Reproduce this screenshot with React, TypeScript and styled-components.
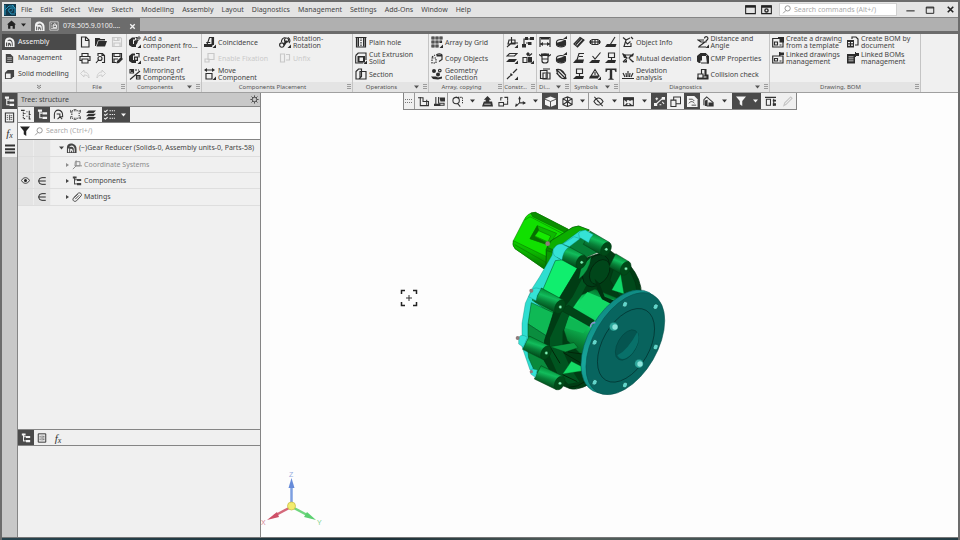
import React from "react";
import styled, { createGlobalStyle, css } from "styled-components";

const ink = "#444444";
const line = "#858585";

const GlobalStyle = createGlobalStyle`
  *, *::before, *::after { box-sizing: border-box; }
  html, body, #root { height: 100%; margin: 0; }
  body { overflow: hidden; background: #fdfdfd; color: ${ink}; font: 7px/8px "Noto Sans", "Open Sans", sans-serif; }
  button, input { font: inherit; color: inherit; margin: 0; }
  button { border: 0; padding: 0; background: none; text-align: left; }
`;

/* Icons are drawn on a 12-unit grid.
   Prefix: s stroke, t thin stroke, d dashed stroke, f fill, w paper fill, k ink stroke. */
const icons: Record<string, string[]> = {
  assembly: ["f:M1 11V5C1 2 3 .5 5.500 .5C9 .5 11.500 3 11.500 6.500V11z", "w:M2.200 6h1.300v4H2.200z", "w:M4 3.500c3-2 5.500.5 5.500 4V10H8.500V7c0-2-1.500-3.500-4.500-2.500z", "w:M4.500 6.500c2-1 3 .5 3 2V10H6.500V8.500H5.500V10h-1z"],
  document: ["f:M2 1h5l3 3v7H2z", "w:M3.500 5h5v.6h-5zM3.500 7h5v.6h-5zM3.500 9h5v.6h-5z"],
  solid: ["f:M1 4l3-3h7v7l-3 3H1z", "w:M2.200 5h5v5h-5z"],
  drawing: ["t:M1 1h10v10H1zM2.500 3h1M2.500 5h1M2.500 7h1M2.500 9h7", "s:M5 8V5l2-2 2 2v3zM5 5h4"],
  home: ["f:M0 6l6-5.500L12 6H10.500v5.500h-3V8h-3v3.500h-3V6z"],
  newFile: ["s:M2.500 1h4.500l3 3v7H2.500zM6.500 1.500v3h3"],
  folder: ["f:M0 2h4.500l1 1h4.500v1.500H3L1 10H0z", "f:M3.500 5H12l-2 5.500H1.500z"],
  save: ["s:M1.500 1.500h8l1 1v8h-9zM3 1.500v3h5v-3M3 10.500V7h6v3.500", "f:M6 2h1.200v2H6z"],
  print: ["s:M3 4V1.500h6V4M3 8.500H1V4.500h10v4H9M3 7h6v4H3z"],
  preview: ["s:M3 4V1.500h4.500l2 2V10.500H7M7 1.500v2h2", "s:M7 6.500a2 2 0 1 1-4 0a2 2 0 1 1 4 0M3.500 8L1 11"],
  saveAs: ["s:M10.500 6V1.500h-9v9h4M3 1.500v3h6v-3M3 10.500V7h4", "f:M5.500 11.500l.5-2.500L10 5l2 2-4 4z"],
  undo: ["t:M5 2L1.500 5.500L5 9V7c3 0 4 1 5 3c0-4-2-6-5-6z"],
  redo: ["t:M7 2l3.500 3.500L7 9V7c-3 0-4 1-5 3c0-4 2-6 5-6z"],
  addComp: ["f:M0 4l3-2.500h3v2H4v4.500h3v3H3L0 9z", "s:M6.500 1.500H8v3h1.500", "f:M5 5l2-1 2 1.500-1.500 3H5zM8.500 12H12V8.500z", "t:M10 0v4M8 2h4"],
  createPart: ["f:M0 4l3-2.500h3v2H4v4.500h3v3H3L0 9z", "f:M5 4.500h4v4.500H5zM8.500 12H12V8.500z", "w:M6.200 5.700h1.600v2H6.200z", "s:M7 1.500h3v4"],
  mirror: ["s:M1 1.500h3.500v3.500H1zM7.500 7.500H11V11H7.500zM1 11.500L11 3", "s:M6 2h2M9 2h1M8 9h3", "f:M2 2h2v2H2z"],
  coincide: ["s:M3 8.500L5.500 1.500h4V8", "f:M0 8h9l-1 3H0zM7.500 1H10v8H7.500zM2.500 6h4l-.5 1h-4zM8.500 12H12V8.500z"],
  fix: ["s:M4 1.500h6v6H4zM1 7h4v3H1z"],
  move: ["s:M2 5.500h6v5.500H2zM1 2h8", "f:M0 2l3-2v4zM11 2L8 0v4zM8.500 12H12V8.500z"],
  rotation: ["s:M9 1.500a3.500 3.500 0 0 1 1 5.500M6.500 1.500a4 4 0 0 0-4 4.500", "s:M5 9a2.200 2.200 0 1 1-4.400 0a2.200 2.200 0 1 1 4.400 0M9.500 4a2 2 0 1 1-4 0a2 2 0 1 1 4 0", "f:M4 8l3-4 1.500 1.500-3 4.500zM8.500 12H12V8.500z"],
  unfix: ["s:M1.500 2h4v8h-4zM7 2.500h3.500V8H7"],
  hole: ["s:M.5 1.500h11M1.500 1.500v9.500h9V1.500", "f:M2.500 2H4v8.500H2.500zM8 2h1.500v8.500H8z", "d:M6 1v10"],
  cut: ["s:M.7 3.500l2.500-2.500H11v7", "s:M.7 3.500V11H8", "f:M2.500 4H10v6.500H2.500zM8.500 12H12V8.500z", "w:M4.500 5.500H8v3.500H4.500z"],
  section: ["s:M1 3.500l2.500-2.500h3v7.500L4 11H1zM5 3.500h6V11H5z"],
  array: ["s:M1 1h2v2H1zM5 1h2v2H5zM9 1h2v2H9zM1 5h2v2H1zM5 5h2v2H5zM9 5h1.500v1.500H9zM1 9h2v2H1zM5 9h2v2H5z", "f:M8.500 12H12V8.500z"],
  copy: ["d:M1 6h4v5H1zM1 5l3-2", "s:M5.500 3a2.800 1.500 0 0 1 5.500 0v4.500L8 9.500", "f:M5.500 2.500H11v2H5.500z"],
  geometry: ["f:M1 3a2 2 0 1 1 4 0a2 2 0 1 1-4 0M5 6.500a2 2 0 1 1 4 0a2 2 0 1 1-4 0M0 8.500h5l2 1 4-1v2l-4 1-5-.5z", "s:M7.500 2.500a1.300 1.300 0 1 1 2.600 0a1.300 1.300 0 1 1-2.600 0"],
  axes: ["s:M3 4h6v4H2zM5.500 7V1M5.500 7H12M5.500 7L1 11", "f:M8.500 12H12V8.500z"],
  nodes: ["s:M2 10V3h7M4 7h4", "f:M0 8h4v3.500H0zM8 1h4v3H8zM6 6h3.500v3H6zM3 1h3v3H3z"],
  planes: ["s:M3.500 1.500H11L8.500 4H1z", "f:M3 7h8l-2.500 3H0zM8.500 12H12V8.500z"],
  blocks: ["s:M1 5.500h4v5H1z", "f:M6 5h4v5.500H6zM6 0l2 2-2 2.500L4 2zM8.500 12H12V8.500z", "s:M7 4l3-2.500"],
  axisLine: ["s:M1 11l3-3M5 7l1-1M7 5l4-4", "f:M4.500 5L7 7 4 8.500zM8.500 12H12V8.500z"],
  dimH: ["s:M1 11V1.500h10V11M1 8h10", "f:M1 8l3-2v4zM11 8L8 6v4zM2 2h8v1.500H2z"],
  disc: ["s:M1.500 6a4.500 2.500 0 1 1 9 0v2.500a4.500 2.500 0 1 1-9 0z", "f:M1 7l10-3v4.500l-4 2.500-5-1.500zM8 3l4-3v3z"],
  diam: ["s:M3 4a3 2 0 1 1 6 0v5a3 2 0 1 1-6 0zM0 2.500l3 2M12 2.500l-3 2M3 7h6", "f:M2 1.500h8v2.500H2z"],
  dimBox: ["s:M1.500 2.500h6.500v8h-6.500zM4 5h7v6H4zM4 1h7", "t:M6 7h3M6 9h3"],
  ring: ["s:M1.500 1.500c5-1 9 3 9.500 9c-5 1-9-3-9.500-9zM2 2l8.500 8.500M5 1.500l6 6M1.500 5l5 5"],
  thread: ["s:M1 8L7 1.500l4 2.500-6.500 7z", "f:M2 8l6-6.500 1.200 1.200-6 6.500zM4 9.500l6-6.500 1 1-6 6.500z"],
  pin: ["s:M3 3.500h6v5H3zM0 6h12M6 3.500v5M1.500 4v4M10.500 4v4"],
  leader: ["s:M5 9l5-8", "f:M2 8h9.500l-1 3H0z"],
  leader2: ["s:M4 8L6 1.500h5M6 4.500h4", "f:M3 7.500h8L10 11H0z"],
  rough: ["s:M3.500 4l2.500 3 5.500-6.500", "f:M3 8h8l-1 3H0z"],
  stamp: ["s:M3.500 1h6v4.500h-6zM6.500 5v3", "f:M3 8h8l-1 3H0z"],
  warn: ["s:M2 8l4-6.500L10 8zM6 4v3", "f:M1 8h9l-1 2.500H0zM8.500 12H12V8.500z"],
  text: ["f:M.5 .5h11v3.500h-1L9.500 2H7.200v8.500l1.500.5v.7H3.300V11l1.500-.5V2H2.500L1.500 4h-1z"],
  info: ["s:M1 1.500l3 2.500 4-2M4 4l-2 6.500h7V7", "s:M3.500 6l2 2 3-2.500M9 1l2 2"],
  mutual: ["s:M1 2l4 4-4 4M11 2L7 6l4 4M3 3h6", "f:M0 1l4 2v3H2zM12 1L7 4.500h4zM1 10.500h4V7.500zM7 7l5 2.500v1z"],
  deviation: ["s:M0 10.500h12M3 9L1 5M6 9V3M9 9l2-4M4.500 9L4 5M7.500 9l.5-4"],
  distance: ["s:M1 11h8M2 10.500l6-4.500H4L1 4h6M7.500 2.500a1.700 1.700 0 1 1 3 1L9 5v1.500", "f:M8.500 12H12V8.500z"],
  cmp: ["s:M1 4l3-2.500h4.500l2.500 2.500V11H4", "f:M0 4l4-3h5v3H5v4.500H3.500V11H2L0 9.500zM9 4h3v7.500h-2z"],
  collision: ["s:M4.500 6V1.500h4V8M1 6h5v4.500H1zM6 8h4.500v2.500H6", "f:M0 9.500h11v2H0zM7.500 1h2v7h-2zM9.500 6.500h2v5h-2z"],
  template: ["s:M.7 2.500H11V11H.7zM2.500 6h3v3h-3zM7.500 9h2", "f:M6 1h6v5.500H7.500V3H6z"],
  linked: ["s:M.7 4H11v7H.7zM2.500 6.500h3v2.500h-3zM7.500 9h2", "f:M7 0h1.500v4H7zM8 .5h4v2.500H8z"],
  bom: ["s:M5 3V1h4l2 2v6H8", "f:M0 4h7v7.500H0z", "w:M1 6h2v1.200H1zM4 6h2v1.200H4zM1 8.500h2v1.200H1zM4 8.500h2v1.200H4z"],
  boms: ["f:M0 2h8v9.500H0zM9 1h3v3H9zM8 0h1v5H8z", "w:M1.500 4.500h5v.7h-5zM1.500 6.500h5v.7h-5zM1.500 8.500h5v.7h-5z"],
  tree: ["s:M3 1v9M3 4.500h3M3 9.500h3", "f:M1 .5h4.500v2.500H1zM6 3.500h5V6H6zM6 8.500h5V11H6z"],
  treeD: ["d:M2.500 1v9.500h3M2.500 5h3", "s:M0 1.500h4M6 3h1M9 2v4h1.500M6 8h1M9 7v4h1.500"],
  table: ["s:M1.500 1h9v10h-9z", "t:M6 3v6M3 4h1.500M7 4h2M3 6h1.500M7 6h2M3 8h1.500M7 8h2"],
  bars: ["f:M0 .5h12V3H0zM0 5h12v2.500H0zM0 9h12v2.500H0z"],
  link: ["s:M1.500 10.500V6c0-7 9-6 9 1v1.500H7.500M4 5.500h3.500v3L5 11M7 8l3 3"],
  frame: ["d:M2 2h8v8H2z", "t:M.5 1v3M4 .5h3M11.500 1v3M4 11.500h3M11.500 8v3M.5 8v3"],
  layers: ["f:M3 .5h9L9 3.500H0zM3 4.500h9l-3 3H0zM3 8.500h9l-3 3H0z"],
  list: ["d:M6 2h6M6 6h6M6 10h6", "s:M0 2l1.500 1L4 1M0 6l1.500 1L4 5M0 10l1.500 1L4 9"],
  funnel: ["f:M0 .5h12L7.500 6v6l-3-2V6z"],
  search: ["s:M11 4.500a3.500 3.500 0 1 1-7 0a3.500 3.500 0 1 1 7 0M5 7.500L1.500 11"],
  gear: ["s:M9 6a3 3 0 1 1-6 0a3 3 0 1 1 6 0", "s:M6 .5v2.500M6 9v2.500M.5 6H3M9 6h2.500M2 2l2 2M8 8l2 2M2 10l2-2M8 4l2-2"],
  eye: ["s:M.5 6c3-5 8-5 11 0c-3 5-8 5-11 0z", "f:M4 6a2 2 0 1 1 4 0a2 2 0 1 1-4 0"],
  member: ["s:M10.500 2H6a4 4 0 0 0 0 8h4.500M2 6h8.500"],
  coords: ["s:M4 2h5.500v5H3.500zM5 7L1 11M4 7h8M5 7V.5"],
  clip: ["s:M2 7l5.500-5.500c2-1.500 5 1 3.500 3L5.500 10.500c-2.500 2-5.500-.5-4-3L7 2.500M4 8.500L8.500 4"],
  sketch: ["s:M2.500 1v9.500h9V6h-6V2H0M9.500 4v7"],
  sketch2: ["s:M2 1v9h9V8H5V1", "f:M6 1.500h6V6H7zM0 8.500h7V11H0z"],
  zoomBox: ["s:M1 5a3.500 3.500 0 1 1 7 0a3.500 3.500 0 1 1-7 0M6 8l3 3.500", "d:M4 1.500h7.500V8"],
  orient: ["f:M6 0l4 4H8v2h3l1 5.500H0l2-5.500h2V4H2z", "w:M2.500 8.500h7v.8h-7z"],
  rotate: ["s:M1 7h5v4H1zM6.500 9h4V5M7 1.500h3.500v3M3 5V2h2"],
  triad: ["s:M5 1v6.500L1 11M5 7.500h6", "f:M3.500 3.500L5 0l1.500 3.500zM8.500 5.500L12 7.500 8.500 9.500zM0 12l1-4 2 2z"],
  cube: ["f:M0 3l6-2.500L12 3v6.500L6 12 0 9.500z", "k:M0 3.500l6 2.500 6-2.500M6 6v6"],
  wire: ["s:M1 3l5-2 5 2v6.500L6 11.500l-5-2zM1 3l5 3 5-3M6 1v10.500M1 9.500L6 6l5 3.500"],
  hide: ["s:M1 6c3-5 7-5 10 0c-3 5-7 5-10 0zM1.500 1l9 10M4.500 5l3 2.500"],
  camera: ["s:M.7 2h10.600v8.500H.7z", "f:M0 1.500h12v3H0zM2 3l8 7H8L2 5zM8 3h2L4 10H2z", "w:M4 6.500a2 2 0 1 1 4 0a2 2 0 1 1-4 0"],
  points: ["s:M2 9l8-7M3 1.500v3M1.500 3h3M6 9.500h2M9 6.500l2 2", "f:M0 7.500h3.500V11H0zM8.500 1H12v3H8.500z"],
  sheets: ["s:M1 4.500h5.500v7H1zM4 4V1h7.500v7.500H7"],
  refresh: ["f:M0 0h8l3.500 3.500V12H0z", "k:M2 3.500h4l2 2M2 8c2-3 5-2 6 0M5 10h5"],
  home3d: ["s:M1 10V4l3-3 7 6v4H4", "f:M2 5l3-1v7H2zM6 7h5v4H6z"],
  ruler: ["s:M0 1.500h12M1.500 3.500H6V10H1.500zM9.500 3v8", "f:M8.500 4H12v2H8.500zM8.500 8H12v2.500H8.500z"],
  brush: ["s:M2 10.500l1-3 6.500-6.500 1.500 1.500L4.500 9z"],
  win: ["s:M.7 2h10.600v8.500H.7z", "f:M.5 1.500h11v2.500H.5z"],
  shot: ["s:M.7 2h10.600v8.500H.7z", "f:M.5 1.500h11v2.500H.5zM3.500 7a2.500 2.500 0 1 1 5 0a2.500 2.500 0 1 1-5 0", "w:M5 7a1 1 0 1 1 2 0a1 1 0 1 1-2 0"],
  minimize: ["s:M1.500 7.500h9"],
  maximize: ["s:M1.500 2.500h9v7.500h-9zM1.500 3.500h9"],
  close: ["b:M3 3l6 6M9 3l-6 6"],
};

const strokeWidths: Record<string, number> = { t: 0.8, s: 1.15, d: 1.15, b: 1.8 };

const Svg = styled.svg<{ $size: number }>`
  width: ${(p) => p.$size}px;
  height: ${(p) => p.$size}px;
  flex: none;
  display: block;
  fill: none;
`;

function Icon({ name, size = 12 }: { name: string; size?: number }) {
  return (
    <Svg $size={size} viewBox="0 0 12 12" aria-hidden="true">
      {icons[name].map((part, i) => {
        const kind = part[0];
        const d = part.slice(2);
        if (kind === "f") return <path key={i} d={d} fill="currentColor" />;
        if (kind === "w") return <path key={i} d={d} fill="#f0f0f0" />;
        if (kind === "k") return <path key={i} d={d} stroke="#444" />;
        return <path key={i} d={d} stroke="currentColor" strokeWidth={strokeWidths[kind]} strokeDasharray={kind === "d" ? "1.500 1" : undefined} />;
      })}
    </Svg>
  );
}

const Frame = styled.div`
  height: 100vh;
  display: flex;
  flex-direction: column;
  border: solid #6c6c6c;
  border-width: 2px 2px 0 2px;
  background: #f0f0f0;
`;
const MenuBar = styled.header`
  display: flex;
  align-items: center;
  height: 15px;
  background: #e4e4e4;
`;
const Logo = styled.svg` width: 14px; height: 14px; margin: 0 4px 0 1px; flex: none; `;
const Menus = styled.nav` display: flex; gap: 8px; flex: 1; `;
const MenuItem = styled.button` white-space: nowrap; `;
const WindowTools = styled.div` display: flex; align-items: center; gap: 4px; `;
const SearchBox = styled.label<{ $wide?: boolean }>`
  display: flex;
  align-items: center;
  gap: 3px;
  background: #fff;
  color: #888;
  ${(p) => p.$wide
    ? css` flex: 1; height: 15px; padding-left: 4px; `
    : css` width: 118px; height: 13px; border: 1px solid #d0d0d0; padding-left: 2px; margin: 0 5px 0 5px; `}
  input { flex: 1; min-width: 0; border: 0; padding: 0; outline: 0; background: none; }
  input::placeholder { color: #aaa; opacity: 1; }
`;
const WinButton = styled.button`
  width: 16px; height: 13px; display: grid; place-items: center; color: #222;
`;
const TabBar = styled.div`
  display: flex;
  height: 17px;
  border-top: 1px solid ${line};
  border-bottom: 3px solid #6c6c6c;
  background: #b0b0b0;
`;
const HomeTab = styled.button`
  width: 29px; display: flex; align-items: center; justify-content: space-evenly; color: #222;
`;
const FileTab = styled.div`
  display: flex; align-items: center; gap: 4px; padding: 0 0 0 3px; height: 16px;
  background: #6c6c6c; color: #eee;
  svg { color: #f2f2f2; }
  svg path[fill="#f0f0f0"] { fill: #6c6c6c; }
`;
const Ribbon = styled.section`
  display: flex; height: 59px; border-bottom: 1px solid #a0a0a0; background: #f0f0f0;
`;
const Modes = styled.div` width: 74px; display: flex; flex-direction: column; flex: none; `;
const Mode = styled.button<{ $active?: boolean }>`
  display: flex; align-items: center; gap: 3px; height: 16px; padding-left: 2px;
  ${(p) => p.$active && css` background: #4a4a4a; color: #f4f4f4; svg path[fill="#f0f0f0"] { fill: #4a4a4a; } `}
`;
const MoreModes = styled.button`
  flex: 1; display: grid; place-items: center; background: #e4e4e4;
`;
const Group = styled.div<{ $w: number }>`
  flex: 0 0 ${(p) => p.$w}px; min-width: 0; display: flex; flex-direction: column; border-left: 1px solid #c4c4c4;
`;
const Commands = styled.div<{ $cols: number; $icons?: boolean }>`
  display: grid; grid-auto-flow: column; grid-template-rows: repeat(3, 16px);
  grid-template-columns: ${(p) => (p.$icons ? `repeat(${p.$cols}, 16px)` : `repeat(${p.$cols}, 1fr)`)};
`;
const Command = styled.button<{ $iconOnly?: boolean; $off?: boolean }>`
  display: flex; align-items: center; gap: 2px; min-width: 0; line-height: 7px; white-space: pre;
  padding-left: ${(p) => (p.$iconOnly ? 0 : 2)}px;
  justify-content: ${(p) => (p.$iconOnly ? "center" : "flex-start")};
  svg { color: #2c2c2c; }
  ${(p) => p.$off && css` color: #cacaca; svg { color: #c8c8c8; } `}
`;
const GroupFoot = styled.div`
  flex: 1; display: flex; align-items: center; gap: 4px; padding-right: 1px;
  background: #e4e4e4; font-size: 6px; color: #555; white-space: nowrap;
`;
const GroupName = styled.span` flex: 1; min-width: 0; text-align: center; `;
const Filler = styled.div` flex: 1; border-left: 1px solid #c4c4c4; `;
const Main = styled.main` flex: 1; display: flex; min-height: 0; `;
const Rail = styled.nav` width: 16px; flex: none; background: #c8c8c8; border-right: 1px solid ${line}; `;
const Tool = styled.button<{ $w?: number; $active?: boolean; $sep?: boolean; $off?: boolean; $paper?: boolean }>`
  width: ${(p) => p.$w ?? 16}px; height: 15px; flex: none; display: grid; place-items: center;
  background: ${(p) => (p.$active ? "#4a4a4a" : p.$paper ? "#f0f0f0" : "transparent")};
  color: ${(p) => (p.$active ? "#f4f4f4" : p.$off ? "#c4c4c4" : "#333")};
  ${(p) => p.$sep && css` border-right: 1px solid #999; `}
`;
const RailTool = styled(Tool)` width: 15px; height: 16px; `;
const Formula = styled.i` font: italic 11px/12px "Liberation Serif", serif; sub { font-size: 8px; line-height: 0; vertical-align: -1px; } `;
const Side = styled.aside`
  width: 243px; flex: none; display: flex; flex-direction: column; border-right: 1px solid ${line};
`;
const PanelTitle = styled.div`
  height: 13px; display: flex; align-items: center; justify-content: space-between; padding: 0 1px 0 3px; background: #c8c8c8;
`;
const ToolRow = styled.div`
  display: flex; height: 17px; border: solid ${line}; border-width: 1px 0; background: #f0f0f0; flex: none;
`;
const FilterRow = styled.div`
  display: flex; align-items: center; height: 17px; padding-left: 2px; border-bottom: 1px solid ${line}; background: #fff; color: #222;
`;
const Tree = styled.ul` flex: 1; margin: 0; padding: 0; list-style: none; `;
const TreeRow = styled.li<{ $muted?: boolean }>`
  display: grid; grid-template-columns: 16px 17px 1fr; height: 16px; border-bottom: 1px solid #dedede;
  white-space: nowrap; color: ${(p) => (p.$muted ? "#8c8c8c" : ink)};
  &:first-child { height: 17px; }
  &:last-child { height: 17px; }
`;
const Flag = styled.button`
  display: grid; place-items: center; background: #e4e4e4; border-right: 1px solid #ededed; color: #222;
`;
const Node = styled.button<{ $level: number }>`
  display: flex; align-items: center; gap: 2px; padding-left: ${(p) => 2 + p.$level * 6}px;
`;
const Lower = styled.section` height: 108px; flex: none; `;
const Viewport = styled.section` flex: 1; min-width: 0; position: relative; background: #fdfdfd; `;
const ViewTools = styled.div`
  display: flex; width: max-content; height: 17px; margin-left: 142px; border: 1px solid ${line}; border-top: 0; background: #f0f0f0;
`;
const ViewTool = styled(Tool)` height: 16px; `;
const Model = styled.svg` position: absolute; left: 239px; top: 107px; width: 180px; height: 205px; `;
const Crosshair = styled.svg` position: absolute; left: 139px; top: 196px; width: 18px; height: 18px; `;
const Axes = styled.svg` position: absolute; left: 0; bottom: 4px; width: 66px; height: 62px; font: 7px "Liberation Sans", sans-serif; `;
const StatusEdge = styled.footer`
  height: 3px; border-top: 1px solid #777; background: linear-gradient(90deg, #28444e, #1b3038 40%, #55605c 60%, #243c44);
`;

const CaretSvg = styled.svg` width: 5px; height: 4px; flex: none; display: block; `;
function Caret({ right }: { right?: boolean }) {
  return <CaretSvg viewBox="0 0 5 4" aria-hidden="true"><path d={right ? "M1 0l3 2-3 2z" : "M0 0.500h5L2.500 3.500z"} fill="currentColor" /></CaretSvg>;
}
const GripSvg = styled.svg` width: 4px; height: 6px; flex: none; `;
function Grip() {
  return <GripSvg viewBox="0 0 4 6" aria-hidden="true"><path d="M1 0v6M3 0v6" stroke="#555" strokeDasharray="1 1" /></GripSvg>;
}

type Cmd = [icon: string, label: string, off?: boolean];
type GroupData = { name: string; w: number; cols: number; caret?: boolean; icons?: boolean; items: Cmd[] };

const groups: GroupData[] = [
  { name: "File", w: 50, cols: 3, icons: true, items: [["newFile", "New"], ["print", "Print"], ["undo", "Undo", true], ["folder", "Open"], ["preview", "Preview"], ["redo", "Redo", true], ["save", "Save", true], ["saveAs", "Save as"]] },
  { name: "Components", w: 75, cols: 1, caret: true, items: [["addComp", "Add a\ncomponent fro..."], ["createPart", "Create Part"], ["mirror", "Mirroring of\nComponents"]] },
  { name: "Components Placement", w: 151, cols: 2, items: [["coincide", "Coincidence"], ["fix", "Enable Fixation", true], ["move", "Move\nComponent"], ["rotation", "Rotation-\nRotation"], ["unfix", "Unfix", true]] },
  { name: "Operations", w: 76, cols: 1, caret: true, items: [["hole", "Plain hole"], ["cut", "Cut Extrusion\nSolid"], ["section", "Section"]] },
  { name: "Array, copying", w: 75, cols: 1, items: [["array", "Array by Grid"], ["copy", "Copy Objects"], ["geometry", "Geometry\nCollection"]] },
  { name: "Constr...", w: 33, cols: 2, icons: true, items: [["axes", "Axes"], ["planes", "Planes"], ["axisLine", "Axis line"], ["nodes", "Nodes"], ["blocks", "Blocks"]] },
  { name: "Di...", w: 34, cols: 2, caret: true, icons: true, items: [["dimH", "Linear dimension"], ["diam", "Diameter"], ["dimBox", "Box dimension"], ["disc", "Radius"], ["disc", "Angle"], ["ring", "Arc"]] },
  { name: "Symbols", w: 49, cols: 3, caret: true, icons: true, items: [["thread", "Thread"], ["leader2", "Leader"], ["stamp", "Datum"], ["pin", "Pin"], ["rough", "Roughness"], ["warn", "Tolerance"], ["leader", "Base"], ["stamp", "Stamp"], ["text", "Text"]] },
  { name: "Diagnostics", w: 150, cols: 2, caret: true, items: [["info", "Object Info"], ["mutual", "Mutual deviation"], ["deviation", "Deviation\nanalysis"], ["distance", "Distance and\nAngle"], ["cmp", "CMP Properties"], ["collision", "Collision check"]] },
  { name: "Drawing, BOM", w: 151, cols: 2, items: [["template", "Create a drawing\nfrom a template"], ["linked", "Linked drawings\nmanagement"], ["", ""], ["bom", "Create BOM by\ndocument"], ["boms", "Linked BOMs\nmanagement"]] },
];

function RibbonGroup({ g }: { g: GroupData }) {
  return (
    <Group $w={g.w}>
      <Commands $cols={g.cols} $icons={g.icons}>
        {g.items.map(([icon, label, off], i) =>
          icon ? (
            <Command key={i} $iconOnly={g.icons} $off={off} disabled={off} aria-label={label}>
              <Icon name={icon} />
              {!g.icons && label}
            </Command>
          ) : <span key={i} />
        )}
      </Commands>
      <GroupFoot><GroupName>{g.name}</GroupName>{g.caret && <Caret />}<Grip /></GroupFoot>
    </Group>
  );
}

type ViewToolData = { icon?: string; w: number; on?: boolean; sep?: boolean; off?: boolean; label: string };
const viewTools: ViewToolData[] = [
  { icon: "sketch", w: 16, label: "Sketch" }, { icon: "sketch2", w: 17, sep: true, label: "Edit sketch" },
  { icon: "zoomBox", w: 18, label: "Zoom" }, { w: 13, label: "Zoom options" },
  { icon: "orient", w: 16, label: "Orientation" }, { icon: "rotate", w: 16, label: "Rotate" }, { icon: "triad", w: 18, label: "Axes" }, { w: 13, label: "Axes options" },
  { icon: "cube", w: 16, on: true, label: "Shaded" }, { icon: "wire", w: 18, label: "Wireframe" }, { w: 13, sep: true, label: "Display options" },
  { icon: "hide", w: 19, label: "Hide" }, { w: 12, label: "Hide options" }, { icon: "camera", w: 17, label: "Camera" }, { w: 14, label: "Camera options" },
  { icon: "points", w: 16, on: true, label: "Points" }, { icon: "sheets", w: 17, label: "Sections" }, { icon: "refresh", w: 16, on: true, label: "Rebuild" },
  { icon: "home3d", w: 17, label: "Simplify" }, { w: 15, label: "Simplify options" },
  { icon: "funnel", w: 17, on: true, label: "Filter" }, { w: 12, on: true, label: "Filter options" },
  { icon: "ruler", w: 18, label: "Measure" }, { icon: "brush", w: 17, off: true, label: "Brush" },
];

function Lobe({ x, y, dx = 62, dy = 34 }: { x: number; y: number; dx?: number; dy?: number }) {
  const px = 10, py = 20;
  return (
    <g stroke="#003d13" strokeWidth="1.500">
      <path d={`M${x - dx + px} ${y - dy - py}L${x + px} ${y - py}L${x - px} ${y + py}L${x - dx - px} ${y - dy + py}z`} fill="url(#lobe)" />
      <ellipse cx={x} cy={y} rx="22" ry="14" transform={`rotate(-62 ${x} ${y})`} fill="#004a18" />
      <circle cx={x + 1} cy={y + 1} r="5" fill="#7df0b4" />
    </g>
  );
}

const disc = (cx: number, cy: number, a: number, b: number) => ({ cx, cy, rx: a, ry: b, transform: `rotate(-60 ${cx} ${cy})` });
const boltHoles = [[375, 313], [467, 320], [467, 441], [375, 555], [284, 547], [284, 427]];

function GearReducer() {
  return (
    <Model viewBox="0 0 540 615" role="img" aria-label="Gear reducer">
      <defs>
        <linearGradient id="lobe" x1="0.650" y1="0.100" x2="0.350" y2="0.900"><stop offset="0" stopColor="#00802f" /><stop offset=".35" stopColor="#12bd5c" /><stop offset=".6" stopColor="#088038" /><stop offset="1" stopColor="#003a12" /></linearGradient>
        <linearGradient id="motorLow" x1="0.600" y1="0" x2="0.400" y2="1"><stop offset="0" stopColor="#10d800" /><stop offset=".4" stopColor="#0cb400" /><stop offset="1" stopColor="#045c00" /></linearGradient>
        <linearGradient id="hub" x1="0.600" y1="0" x2="0.300" y2="1"><stop offset="0" stopColor="#00702a" /><stop offset=".25" stopColor="#13e36b" /><stop offset=".5" stopColor="#0fc35a" /><stop offset=".75" stopColor="#077a30" /><stop offset="1" stopColor="#004417" /></linearGradient>
        <linearGradient id="rim" x1="1" y1="0" x2="0" y2="1"><stop offset="0" stopColor="#0c7f79" /><stop offset=".5" stopColor="#18a79c" /><stop offset="1" stopColor="#087069" /></linearGradient>
      </defs>
      <g stroke="#0a6800" strokeWidth="1.500" strokeLinejoin="round">
        <path d="M40 122L72 60Q82 38 106 37L205 88L172 158L140 212L45 146Q36 136 40 122z" fill="#11e000" />
        <path d="M40 122L152 176L140 212L45 146Q36 136 40 122z" fill="url(#motorLow)" />
        <path d="M92 39L106 37L205 88L196 98L98 50z" fill="#0a8f00" />
        <path d="M44 134L146 192M74 60L90 50L190 102" fill="none" />
        <path d="M90 116L112 77L170 100L148 136z" fill="#0db800" />
        <path d="M90 116L112 77L116 90L104 110L136 126L148 136z" fill="#067000" />
        <path d="M104 108L116 92L152 108L144 126z" fill="#16ea00" />
      </g>
      <g stroke="#055a08" strokeWidth="1.500">
        <path d="M138 210L138 148L150 124L218 82L236 78L268 90L255 108L190 134L160 180L150 214z" fill="#078800" />
        <path d="M142 142L154 122L218 82L236 78L268 90L176 138L162 150z" fill="#0cae00" />
        <path d="M140 152L160 158L152 212L138 208z" fill="#0a9a00" />
      </g>
      <path d="M262 93L240 92L186 132L160 146L156 166L118 232L96 266L76 310L66 370L66 440L90 510L120 530L170 420L198 180L270 112z" fill="#2fded0" stroke="#07796b" />
      <g stroke="#004a18" strokeWidth="1.500">
        <path d="M186 140L250 112L310 150L262 170L236 190z" fill="#078038" />
        <path d="M166 182L194 178L240 200L184 320L128 270z" fill="#10ee6e" />
        <path d="M128 270L182 318L160 345L96 300z" fill="#0c9f48" />
        <path d="M94 308L160 338L146 412L84 372z" fill="#0fb955" />
        <path d="M84 372L146 412L138 452L84 410z" fill="#0a8d3e" />
        <path d="M82 438L136 470L180 550L104 514L86 474z" fill="#098a3c" />
      </g>
      <path d="M232 205L250 176L328 150L390 196Q426 240 424 285L350 480L300 530Q245 575 210 566L172 550L128 474L134 420L172 304z" fill="#003c14" stroke="#002c0e" strokeWidth="2" />
      <path d="M188 330L218 290L246 236L262 250L218 335L188 394L187 450L212 505L238 545L205 552L172 520L150 470L150 414z" fill="#005520" />
      <path d="M350 176Q405 210 412 280L360 290L330 240z" fill="#00491a" stroke="#002208" />
      <ellipse {...disc(288, 212, 52, 36)} fill="#003c16" stroke="#001f0a" strokeWidth="2" />
      <ellipse {...disc(299, 216, 40, 27)} fill="#00461a" stroke="#001f0a" strokeWidth="2" />
      <path d="M192 390L214 330L245 285L285 268L365 300L330 500L242 462L202 421z" fill="url(#hub)" stroke="#00501b" />
      <path d="M228 318L262 276L300 292L356 302L300 352z" fill="#12d964" />
      <path d="M206 352L196 384L250 400L268 378z" fill="#0eb853" />
      <path d="M190 322L206 316L283 361L270 380L184 332z" fill="#004417" stroke="#002b10" />
      <path d="M284 236L298 250L314 290L344 302L334 312L306 298L292 270z" fill="#003010" />
      <path d="M335 270L362 222L372 282z" fill="#0fd968" stroke="#004817" />
      <path d="M236 238L244 200L274 170Q268 214 236 238z" fill="#0a9e46" stroke="#00310f" />
      <path d="M151 440L222 428L234 443L196 456z" fill="#0a9a42" stroke="#00310f" />
      <path d="M188 522L214 484L246 500L250 512z" fill="#14dc66" stroke="#00571e" />
      <path d="M150 440L180 490M204 456L246 462M190 458L244 490M188 524L232 545M256 544Q234 562 206 562" fill="none" stroke="#002508" strokeWidth="3" />
      <Lobe x={244} y={186} /><Lobe x={318} y={147} dx={58} dy={34} /><Lobe x={377} y={205} dx={40} dy={24} />
      <Lobe x={180} y={320} dx={66} dy={36} /><Lobe x={138} y={458} dx={60} dy={30} /><Lobe x={179} y={549} dx={66} dy={32} />
      <g fill="#35e2d6" stroke="#08796d">
        <path d="M160 148Q170 130 186 132L206 142Q190 152 186 180L164 168Q156 160 160 148z" />
        <path d="M236 100Q240 92 256 90L280 104Q270 112 266 128L238 112z" />
        <path d="M188 132L222 110L240 116L208 140z" />
        <path d="M98 268Q106 260 122 268L112 286L108 302L86 290z" /><path d="M56 412Q66 400 82 412L70 442L56 432z" /><path d="M96 506L112 510L106 532L92 522z" />
      </g>
      <g fill="#907c7c"><circle cx="143" cy="131" r="7" /><circle cx="94" cy="272" r="6" /><circle cx="53" cy="414" r="6" /><circle cx="94" cy="515" r="5" /></g>
      <g strokeWidth="1.500">
        <ellipse {...disc(363, 425, 170, 98)} fill="url(#rim)" stroke="#065b56" />
        <ellipse {...disc(376, 431, 168, 96)} fill="#08655f" stroke="#054f4a" />
        <ellipse {...disc(378, 436, 121, 70)} fill="#08635d" stroke="#022f2c" strokeWidth="2" />
        <ellipse {...disc(381, 435, 50, 28)} fill="#055550" stroke="#034842" strokeWidth="2" />
        <path d="M352 466Q383 451 412 396Q425 423 395 462Q365 490 352 466z" fill="#087069" />
      </g>
      {boltHoles.map(([x, y]) => (
        <ellipse key={`${x}-${y}`} {...disc(x, y, 9, 7)} fill="#62d5ca" stroke="#034842" strokeWidth="2" />
      ))}
      <circle cx="341" cy="380" r="13" fill="#2fa89d" stroke="#03534d" /><circle cx="345" cy="381" r="8" fill="#8ee4db" />
      <circle cx="417" cy="491" r="13" fill="#2fa89d" stroke="#03534d" /><circle cx="420" cy="492" r="8" fill="#8ee4db" />
      <path d="M271 382Q273 366 286 368" fill="none" stroke="#8791cf" strokeWidth="5" />
    </Model>
  );
}

const menus = ["File", "Edit", "Select", "View", "Sketch", "Modelling", "Assembly", "Layout", "Diagnostics", "Management", "Settings", "Add-Ons", "Window", "Help"];

export default function App() {
  return (
    <Frame>
      <GlobalStyle />
      <MenuBar>
        <Logo viewBox="0 0 14 14" aria-hidden="true">
          <path d="M1 1h12v12H1z" fill="#12374a" />
          <path d="M2 12V2M2 7l4-4h5M5 7l3 4h4M5 7l3-2h4M9 2l3 3v5" stroke="#2b9ac1" fill="none" />
          <circle cx="7.500" cy="7" r="2" fill="none" stroke="#1d7598" />
        </Logo>
        <Menus>{menus.map((m) => <MenuItem key={m}>{m}</MenuItem>)}</Menus>
        <WinButton aria-label="Layout"><Icon name="win" size={11} /></WinButton>
        <WinButton aria-label="Snapshot"><Icon name="shot" size={11} /></WinButton>
        <SearchBox><Icon name="search" size={9} /><input aria-label="Search commands" placeholder="Search commands (Alt+/)" /></SearchBox>
        <WindowTools>
          <WinButton aria-label="Minimize"><Icon name="minimize" size={11} /></WinButton>
          <WinButton aria-label="Maximize"><Icon name="maximize" size={10} /></WinButton>
          <WinButton aria-label="Close"><Icon name="close" size={11} /></WinButton>
        </WindowTools>
      </MenuBar>
      <TabBar>
        <HomeTab aria-label="Home"><Icon name="home" size={9} /><Caret /></HomeTab>
        <FileTab>
          <Icon name="assembly" size={11} /><Icon name="drawing" size={10} /><span>078.505.9.0100....</span>
          <WinButton aria-label="Close tab"><Icon name="close" size={9} /></WinButton>
        </FileTab>
      </TabBar>
      <Ribbon>
        <Modes>
          <Mode $active><Icon name="assembly" size={11} />Assembly</Mode>
          <Mode><Icon name="document" size={11} />Management</Mode>
          <Mode><Icon name="solid" size={11} />Solid modelling</Mode>
          <MoreModes aria-label="More modes"><GripSvg viewBox="0 0 4 6"><path d="M0 1l2 1.500L4 1M0 3l2 1.500L4 3" fill="none" stroke="#666" strokeWidth=".8" /></GripSvg></MoreModes>
        </Modes>
        {groups.map((g) => <RibbonGroup key={g.name} g={g} />)}
        <Filler />
      </Ribbon>
      <Main>
        <Rail>
          <RailTool $active aria-label="Tree"><Icon name="tree" size={11} /></RailTool>
          <RailTool $paper aria-label="Parameters"><Icon name="table" size={11} /></RailTool>
          <RailTool $paper aria-label="Variables"><Formula>f<sub>x</sub></Formula></RailTool>
          <RailTool $paper aria-label="Panels"><Icon name="bars" size={10} /></RailTool>
        </Rail>
        <Side>
          <PanelTitle>Tree: structure<button aria-label="Panel settings"><Icon name="gear" size={9} /></button></PanelTitle>
          <ToolRow>
            <Tool aria-label="Display"><Icon name="treeD" size={11} /></Tool>
            <Tool $active aria-label="Structure"><Icon name="tree" size={11} /></Tool>
            <Tool $w={17} aria-label="Relations"><Icon name="link" size={11} /></Tool>
            <Tool aria-label="Selection"><Icon name="frame" size={11} /></Tool>
            <Tool aria-label="Layers"><Icon name="layers" size={10} /></Tool>
            <Tool $w={3} as="span" />
            <Tool $active $w={15} aria-label="List"><Icon name="list" size={11} /></Tool>
            <Tool $active $w={13} aria-label="List options"><Caret /></Tool>
          </ToolRow>
          <FilterRow>
            <Icon name="funnel" size={10} />
            <SearchBox $wide><Icon name="search" size={9} /><input aria-label="Search tree" placeholder="Search (Ctrl+/)" /></SearchBox>
          </FilterRow>
          <Tree>
            <TreeRow><Flag aria-label="Visibility" /><Flag aria-label="Inclusion" /><Node $level={1}><Caret /><Icon name="assembly" size={11} /><span>(−)Gear Reducer (Solids-0, Assembly units-0, Parts-58)</span></Node></TreeRow>
            <TreeRow $muted><Flag aria-label="Visibility" /><Flag aria-label="Inclusion" /><Node $level={2}><Caret right /><Icon name="coords" size={10} />Coordinate Systems</Node></TreeRow>
            <TreeRow><Flag aria-label="Visibility"><Icon name="eye" size={9} /></Flag><Flag aria-label="Inclusion"><Icon name="member" size={10} /></Flag><Node $level={2}><Caret right /><Icon name="tree" size={10} />Components</Node></TreeRow>
            <TreeRow><Flag aria-label="Visibility" /><Flag aria-label="Inclusion"><Icon name="member" size={10} /></Flag><Node $level={2}><Caret right /><Icon name="clip" size={10} />Matings</Node></TreeRow>
          </Tree>
          <Lower>
            <ToolRow>
              <Tool $active aria-label="Tree"><Icon name="tree" size={10} /></Tool>
              <Tool aria-label="Parameters"><Icon name="table" size={10} /></Tool>
              <Tool aria-label="Variables"><Formula>f<sub>x</sub></Formula></Tool>
            </ToolRow>
          </Lower>
        </Side>
        <Viewport>
          <ViewTools>
            <ViewTool as="span" $w={11} $sep><svg width="8" height="6" aria-hidden="true"><path d="M0 1.500h8M0 4.500h8" stroke="#777" strokeDasharray="1 1" /></svg></ViewTool>
            {viewTools.map((t) => (
              <ViewTool key={t.label} $w={t.w} $active={t.on} $sep={t.sep} $off={t.off} aria-label={t.label}>
                {t.icon ? <Icon name={t.icon} size={t.icon === "funnel" ? 10 : 11} /> : <Caret />}
              </ViewTool>
            ))}
          </ViewTools>
          <GearReducer />
          <Crosshair viewBox="0 0 18 18" aria-hidden="true">
            <path d="M1.500 5V1.500H5M13 1.500h3.500V5M16.500 13v3.500H13M5 16.500H1.500V13" fill="none" stroke="#222" strokeWidth="1.500" />
            <path d="M9 6v6M6 9h6" stroke="#333" />
          </Crosshair>
          <Axes viewBox="0 0 66 62" role="img" aria-label="Coordinate axes">
            <path d="M30.500 34V14" stroke="#7d9fe0" strokeWidth="2.500" /><path d="M27.500 17L30.500 7l3 10z" fill="#668bd9" />
            <path d="M30 36L13 45" stroke="#d4697b" strokeWidth="2.500" /><path d="M16 41L6 49l12-3z" fill="#cf5068" />
            <path d="M31 36l17 9" stroke="#70d67f" strokeWidth="2.500" /><path d="M46 41l9 8-12-3z" fill="#5bd070" />
            <circle cx="30.500" cy="35" r="4" fill="#f3ec6e" stroke="#c3b944" strokeWidth=".7" />
            <text x="28" y="6" fill="#95acdd">Z</text><text x="0" y="54" fill="#d78593">X</text><text x="56" y="54" fill="#83d28e">Y</text>
          </Axes>
        </Viewport>
      </Main>
      <StatusEdge />
    </Frame>
  );
}
